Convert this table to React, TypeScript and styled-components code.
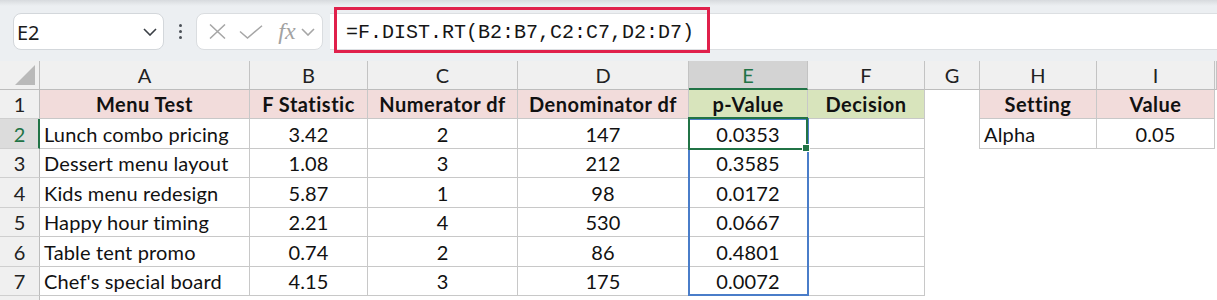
import styled, { createGlobalStyle } from 'styled-components'

const GlobalStyle = createGlobalStyle`
  html, body {
    margin: 0;
    padding: 0;
    background: #ffffff;
  }
  body {
    width: 1217px;
    height: 300px;
    overflow: hidden;
    font-family: Lato, 'Liberation Sans', sans-serif;
  }
`

const GREEN = '#217346'
const GRID = '#c8c8c8'
const PINK = '#f2dcdb'
const OLIVE = '#d8e4bc'

const Window = styled.div`
  display: flex;
  flex-direction: column;
  width: 1217px;
  height: 300px;
  overflow: hidden;
`

const FormulaBar = styled.div`
  display: flex;
  align-items: center;
  height: 61px;
  box-sizing: border-box;
  padding: 13px 0 11px 13px;
  background: linear-gradient(#d7dade 0, #e6e9ec 4px, #eceff2 6px);
`

const NameBox = styled.div`
  display: flex;
  align-items: center;
  justify-content: space-between;
  width: 151px;
  height: 37px;
  box-sizing: border-box;
  padding: 1px 6px 0 3px;
  background: #ffffff;
  border: 1px solid #d3d7db;
  border-radius: 8px;
  font-family: 'Noto Sans', 'Open Sans', sans-serif;
  font-size: 20px;
  color: #1b1b1b;
`

const Dots = styled.div`
  display: flex;
  flex-direction: column;
  align-items: center;
  gap: 3px;
  width: 32px;
  span {
    width: 3px;
    height: 3px;
    border-radius: 50%;
    background: #4b5057;
  }
`

const FxBox = styled.div`
  display: flex;
  align-items: center;
  width: 127px;
  height: 37px;
  box-sizing: border-box;
  padding-left: 10px;
  background: #ffffff;
  border: 1px solid #dadde0;
  border-radius: 8px;
`

const IconSlot = styled.span<{ $w: number }>`
  display: flex;
  align-items: center;
  justify-content: center;
  width: ${(p) => p.$w}px;
  height: 100%;
`

const FxText = styled.span`
  font-family: 'Liberation Serif', 'DejaVu Serif', serif;
  font-style: italic;
  font-size: 24px;
  color: #a2a2a2;
  line-height: 1;
  margin-top: -2px;
`

const FormulaInput = styled.div`
  flex: 1;
  display: flex;
  align-items: flex-start;
  height: 37px;
  margin-left: 7px;
  background: #ffffff;
  border-top: 1px solid #dcdfe2;
  border-bottom: 1px solid #dcdfe2;
  box-sizing: border-box;
`

const Highlight = styled.div`
  display: flex;
  align-items: center;
  height: 46px;
  margin: -7px 0 0 4px;
  padding: 5px 13px 0 9px;
  box-sizing: border-box;
  border: 3px solid #e0204b;
  font-family: 'Liberation Mono', 'DejaVu Sans Mono', monospace;
  font-size: 20px;
  color: #151515;
  white-space: nowrap;
`

const Sheet = styled.div`
  display: grid;
  grid-template-columns: 40px 210px 118px 150px 171px 119px 117px 55px 117px 118px 2px;
  grid-template-rows: 29px 29px 30px 29px 30px 29px 30px 29px 20px;
  font-size: 20px;
  color: #111;
`

const Corner = styled.div`
  position: relative;
  background: #f0f0f0;
  border-right: 1px solid #bdbdbd;
  border-bottom: 1px solid #bdbdbd;
  box-sizing: border-box;
  &::after {
    content: '';
    position: absolute;
    right: 4px;
    bottom: 4px;
    width: 0;
    height: 0;
    border-left: 20px solid transparent;
    border-bottom: 20px solid #b9b9b9;
  }
`

const ColHead = styled.div<{ $active?: boolean }>`
  display: flex;
  align-items: center;
  justify-content: center;
  box-sizing: border-box;
  background: ${(p) => (p.$active ? '#d3d3d3' : '#f0f0f0')};
  color: ${(p) => (p.$active ? GREEN : '#222')};
  border-right: 1px solid #c3c3c3;
  border-bottom: ${(p) => (p.$active ? `2px solid ${GREEN}` : '1px solid #bdbdbd')};
`

const RowHead = styled.div<{ $active?: boolean }>`
  display: flex;
  align-items: center;
  justify-content: center;
  box-sizing: border-box;
  background: ${(p) => (p.$active ? '#dcdcdc' : '#f0f0f0')};
  color: ${(p) => (p.$active ? GREEN : '#222')};
  border-bottom: 1px solid #cfcfcf;
  border-right: ${(p) => (p.$active ? `2px solid ${GREEN}` : '1px solid #bdbdbd')};
  padding-left: ${(p) => (p.$active ? '1px' : '0')};
`

const Cell = styled.div<{
  $bg?: string
  $align?: 'left' | 'center'
  $bold?: boolean
  $r?: boolean
  $b?: boolean
}>`
  position: relative;
  display: flex;
  align-items: center;
  justify-content: ${(p) => (p.$align === 'left' ? 'flex-start' : 'center')};
  padding-left: ${(p) => (p.$align === 'left' ? '4px' : '0')};
  box-sizing: border-box;
  background: ${(p) => p.$bg || '#ffffff'};
  font-weight: ${(p) => (p.$bold ? 700 : 400)};
  letter-spacing: ${(p) => (p.$bold ? '0.5px' : '0.15px')};
  border-right: ${(p) => (p.$r ? `1px solid ${GRID}` : 'none')};
  border-bottom: ${(p) => (p.$b ? `1px solid ${GRID}` : 'none')};
  white-space: nowrap;
`

const RangeBox = styled.div`
  position: absolute;
  left: -1px;
  top: -1px;
  width: 121px;
  height: 178px;
  box-sizing: border-box;
  border: 2px solid #4a7dc9;
  pointer-events: none;
  z-index: 1;
`

const ActiveBox = styled.div`
  position: absolute;
  left: -1px;
  top: -2px;
  width: 120px;
  height: 33px;
  box-sizing: border-box;
  border: 2px solid ${GREEN};
  pointer-events: none;
  z-index: 2;
`

const FillHandle = styled.div`
  position: absolute;
  right: -4px;
  bottom: -4px;
  width: 8px;
  height: 8px;
  box-sizing: border-box;
  background: ${GREEN};
  border: 1px solid #ffffff;
`

const Chevron = ({ color }: { color: string }) => (
  <svg width='14' height='8' viewBox='0 0 14 8'>
    <path d='M1 1 L7 7 L13 1' fill='none' stroke={color} strokeWidth='1.6' />
  </svg>
)

const columns = ['A', 'B', 'C', 'D', 'E', 'F', 'G', 'H', 'I', '']

const headers = [
  'Menu Test',
  'F Statistic',
  'Numerator df',
  'Denominator df',
  'p-Value',
  'Decision',
]

const rows = [
  ['Lunch combo pricing', '3.42', '2', '147', '0.0353'],
  ['Dessert menu layout', '1.08', '3', '212', '0.3585'],
  ['Kids menu redesign', '5.87', '1', '98', '0.0172'],
  ['Happy hour timing', '2.21', '4', '530', '0.0667'],
  ['Table tent promo', '0.74', '2', '86', '0.4801'],
  ["Chef's special board", '4.15', '3', '175', '0.0072'],
]

const App = () => {
  return (
    <Window>
      <GlobalStyle />
      <FormulaBar>
        <NameBox>
          <span>E2</span>
          <Chevron color='#3a3f45' />
        </NameBox>
        <Dots>
          <span />
          <span />
          <span />
        </Dots>
        <FxBox>
          <IconSlot $w={20}>
            <svg width='17' height='15' viewBox='0 0 17 15'>
              <path d='M1 0.5 L16 14.5 M16 0.5 L1 14.5' stroke='#a6a6a6' strokeWidth='1.5' />
            </svg>
          </IconSlot>
          <IconSlot $w={48}>
            <svg width='24' height='14' viewBox='0 0 24 14'>
              <path d='M1 6.5 L8.5 13 L23 0.8' fill='none' stroke='#a6a6a6' strokeWidth='1.5' />
            </svg>
          </IconSlot>
          <IconSlot $w={24}>
            <FxText>fx</FxText>
          </IconSlot>
          <IconSlot $w={18}>
            <Chevron color='#a6a6a6' />
          </IconSlot>
        </FxBox>
        <FormulaInput>
          <Highlight>=F.DIST.RT(B2:B7,C2:C7,D2:D7)</Highlight>
        </FormulaInput>
      </FormulaBar>

      <Sheet>
        <Corner />
        {columns.map((c, i) => (
          <ColHead key={i} $active={c === 'E'}>
            {c}
          </ColHead>
        ))}

        <RowHead>1</RowHead>
        {headers.map((h, i) => (
          <Cell key={h} $bg={i >= 4 ? OLIVE : PINK} $bold $r $b>
            {h}
          </Cell>
        ))}
        <Cell $r />
        <Cell $bg={PINK} $bold $r $b>
          Setting
        </Cell>
        <Cell $bg={PINK} $bold $r $b>
          Value
        </Cell>
        <Cell />

        {rows.map((r, ri) => (
          <>
            <RowHead key={`h${ri}`} $active={ri === 0}>
              {ri + 2}
            </RowHead>
            <Cell key={`a${ri}`} $align='left' $r $b>
              {r[0]}
            </Cell>
            <Cell key={`b${ri}`} $r $b>
              {r[1]}
            </Cell>
            <Cell key={`c${ri}`} $r $b>
              {r[2]}
            </Cell>
            <Cell key={`d${ri}`} $r $b>
              {r[3]}
            </Cell>
            <Cell key={`e${ri}`} $r $b>
              {r[4]}
              {ri === 0 && (
                <>
                  <RangeBox />
                  <ActiveBox>
                    <FillHandle />
                  </ActiveBox>
                </>
              )}
            </Cell>
            <Cell key={`f${ri}`} $r $b />
            <Cell key={`g${ri}`} $r={ri === 0} />
            {ri === 0 ? (
              <>
                <Cell key='h2' $align='left' $r $b>
                  Alpha
                </Cell>
                <Cell key='i2' $r $b>
                  0.05
                </Cell>
              </>
            ) : (
              <>
                <Cell key={`h${ri}x`} />
                <Cell key={`i${ri}x`} />
              </>
            )}
            <Cell key={`z${ri}`} />
          </>
        ))}

        <RowHead />
      </Sheet>
    </Window>
  )
}

export default App
